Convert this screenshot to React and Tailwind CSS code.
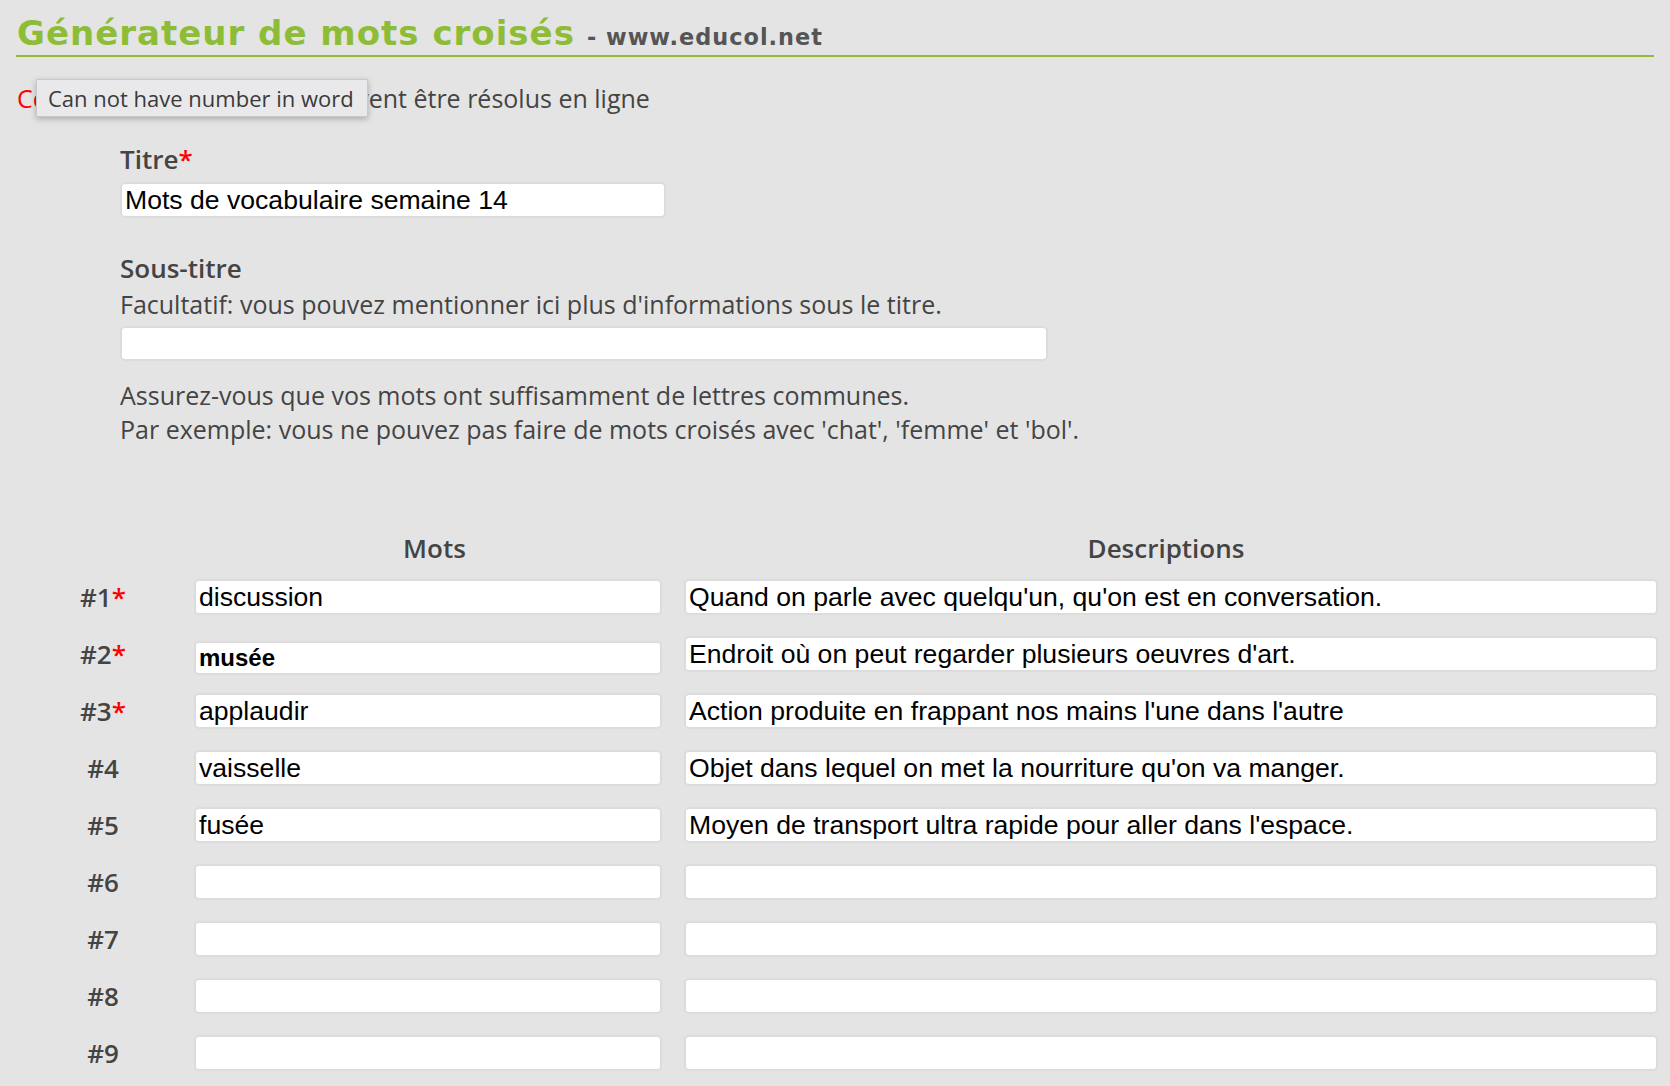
import React from "react";

const rows = [
  { n: 1, req: true, word: "discussion", desc: "Quand on parle avec quelqu'un, qu'on est en conversation.", auto: true },
  { n: 2, req: true, word: "musée", desc: "Endroit où on peut regarder plusieurs oeuvres d'art.", bold: true },
  { n: 3, req: true, word: "applaudir", desc: "Action produite en frappant nos mains l'une dans l'autre" },
  { n: 4, word: "vaisselle", desc: "Objet dans lequel on met la nourriture qu'on va manger." },
  { n: 5, word: "fusée", desc: "Moyen de transport ultra rapide pour aller dans l'espace." },
  { n: 6, word: "", desc: "" },
  { n: 7, word: "", desc: "" },
  { n: 8, word: "", desc: "" },
  { n: 9, word: "", desc: "" },
];

const box =
  "bg-white border-2 border-[#dcdcdc] rounded-[5px] pl-[3px] text-black leading-[30px] overflow-hidden whitespace-nowrap flex items-center";

const arial = { fontFamily: '"Liberation Sans", Arial, sans-serif' };
const dejavu = { fontFamily: '"DejaVu Sans", Verdana, sans-serif' };

export default function App() {
  return (
    <div
      className="min-h-[1086px] w-[1670px] bg-[#e4e4e4] text-[#444] relative overflow-hidden"
      style={{ fontFamily: '"Open Sans", sans-serif' }}
    >
      {/* Header */}
      <div className="mx-[16px] pt-[13px] border-b-2 border-[#8dbd36] flex items-baseline">
        <h1
          className="text-[34px] leading-[40px] font-bold tracking-[1px] text-[#8dbd36] pl-[1px]"
          style={dejavu}
        >
          Générateur de mots croisés
        </h1>
        <span className="ml-[12px] text-[22.4px] font-bold tracking-[1px] text-[#555]" style={dejavu}>
          - www.educol.net
        </span>
      </div>

      {/* Intro line */}
      <p className="mt-[24px] ml-[17px] h-[34px] text-[25px] leading-[34px] whitespace-nowrap">
        <span className="text-[#ff0000]">Ces mots croisés récents</span> peuvent être résolus en ligne
      </p>

      {/* Tooltip */}
      <div className="absolute left-[36px] top-[79px] w-[332px] h-[38px] bg-[#e9e9eb] border border-[#c9c9c9] shadow-[0_2px_6px_rgba(0,0,0,0.25)] flex items-center pl-[11px] text-[22px] text-[#3a3a3a] whitespace-nowrap">
        Can not have number in word
      </div>

      {/* Form */}
      <div className="pl-[120px]">
        <div className="mt-[27px] h-[34px] text-[26px] leading-[34px] font-semibold">
          Titre<span className="text-[#ff0000]">*</span>
        </div>
        <div className={box + " h-[36px] text-[26.6px] mt-[6px] w-[546px]"} style={arial}>
          Mots de vocabulaire semaine 14
        </div>

        <div className="mt-[33px] h-[34px] text-[26px] leading-[34px] font-semibold">Sous-titre</div>
        <div className="mt-[2px] h-[34px] text-[25px] leading-[34px]">
          Facultatif: vous pouvez mentionner ici plus d'informations sous le titre.
        </div>
        <div className={box + " mt-[5px] w-[928px] h-[35px]"} />

        <div className="mt-[17px] text-[25px] leading-[34px]">
          <p>Assurez-vous que vos mots ont suffisamment de lettres communes.</p>
          <p>Par exemple: vous ne pouvez pas faire de mots croisés avec 'chat', 'femme' et 'bol'.</p>
        </div>
      </div>

      {/* Table */}
      <div className="mt-[85px] pl-[60px]">
        <div className="flex h-[34px] text-[26px] leading-[34px] font-semibold">
          <div className="w-[86px]" />
          <div className="ml-[48px] w-[468px] text-center pl-[13px]">Mots</div>
          <div className="ml-[22px] w-[974px] text-center pr-[10px]">Descriptions</div>
        </div>
        <div className="mt-[14px] flex flex-col gap-[21px]">
          {rows.map((r) => (
            <div key={r.n} className="flex h-[36px]">
              <div className="w-[86px] text-center text-[26px] leading-[36px] font-semibold">
                #{r.n}
                {r.req && <span className="text-[#ff0000]">*</span>}
              </div>
              <div
                className={
                  box +
                  " ml-[48px] w-[468px]" +
                  (r.bold ? " font-bold text-[24px] mt-[5px] h-[34px]" : " text-[26.6px] h-[36px]")
                }
                style={arial}
              >
                {r.word}
              </div>
              <div
                className={
                  box + " ml-[22px] w-[974px] h-[36px] text-[26.6px]" + (r.auto ? " bg-[#e8f0fe]" : "")
                }
                style={arial}
              >
                {r.desc}
              </div>
            </div>
          ))}
        </div>
      </div>
    </div>
  );
}
